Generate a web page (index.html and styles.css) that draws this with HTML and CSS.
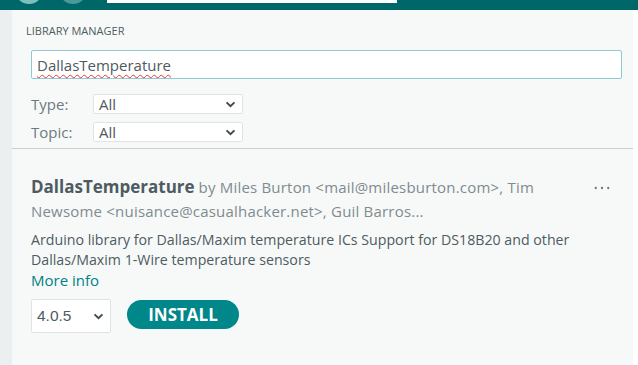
FILE: index.html
```html
<!DOCTYPE html>
<html>
<head>
<meta charset="utf-8">
<link rel="stylesheet" href="styles.css">
</head>
<body>
<div class="topbar">
  <span class="tb-btn tb-btn1"></span>
  <span class="tb-btn tb-btn2"></span>
  <span class="tb-select"></span>
</div>
<div class="main">
  <div class="sidebar"></div>
  <div class="panel">
    <div class="filters">
      <div class="title">LIBRARY MANAGER</div>
      <div class="search"><span class="search-text">DallasTemperature</span></div>
      <div class="filter-row first-row">
        <span class="filter-label">Type:</span>
        <div class="select"><span>All</span><svg class="chev" viewBox="0 0 12 8"><path d="M1.5 1.5 L6 6 L10.5 1.5" /></svg></div>
      </div>
      <div class="filter-row">
        <span class="filter-label">Topic:</span>
        <div class="select"><span>All</span><svg class="chev" viewBox="0 0 12 8"><path d="M1.5 1.5 L6 6 L10.5 1.5" /></svg></div>
      </div>
    </div>
    <div class="entry">
      <div class="entry-head">
        <div class="entry-title">
          <div class="title-line"><span class="lib-name">DallasTemperature</span> <span class="lib-author">by Miles Burton &lt;mail@milesburton.com&gt;, Tim</span></div>
          <div class="title-line lib-author">Newsome &lt;nuisance@casualhacker.net&gt;, Guil Barros...</div>
        </div>
        <svg class="more-btn" viewBox="0 0 18 4"><circle cx="2" cy="2" r="1.3"/><circle cx="9" cy="2" r="1.3"/><circle cx="16" cy="2" r="1.3"/></svg>
      </div>
      <div class="desc">Arduino library for Dallas/Maxim temperature ICs Support for DS18B20 and other Dallas/Maxim 1-Wire temperature sensors</div>
      <div class="more-info">More info</div>
      <div class="actions">
        <div class="version"><span>4.0.5</span><svg class="chev" viewBox="0 0 12 8"><path d="M1.5 1.5 L6 6 L10.5 1.5" /></svg></div>
        <div class="install">INSTALL</div>
      </div>
    </div>
  </div>
  <div class="rightgap"></div>
</div>
</body>
</html>
```
FILE: styles.css
```css
html, body {
  margin: 0;
  padding: 0;
}
body {
  width: 638px;
  height: 365px;
  overflow: hidden;
  font-family: "Open Sans", "Noto Sans", sans-serif;
  background: #ffffff;
}
.topbar {
  height: 10px;
  background: #006769;
  position: relative;
  overflow: hidden;
}
.tb-btn {
  position: absolute;
  top: -24px;
  width: 28px;
  height: 28px;
  border-radius: 50%;
}
.tb-btn1 { left: 15px; background: #7dbfbf; }
.tb-btn2 { left: 59px; background: #4a9a9b; }
.tb-select {
  position: absolute;
  left: 107px;
  top: 0;
  width: 290px;
  height: 3px;
  background: #ffffff;
}
.main {
  display: flex;
  height: 355px;
}
.sidebar {
  width: 12px;
  background: #eceff0;
}
.panel {
  flex: 1;
  background: #f7f9f9;
  display: flex;
  flex-direction: column;
}
.rightgap {
  width: 5px;
  background: #ffffff;
}
.filters {
  padding: 13px 11px 6px 14px;
  border-bottom: 1px solid #c9d0d0;
}
.title {
  font-size: 11px;
  color: #4e5b61;
  line-height: 16px;
}
.search {
  margin: 11px 0 0 5px;
  height: 29px;
  box-sizing: border-box;
  border: 1px solid #8dcbd0;
  border-radius: 2px;
  background: #ffffff;
  display: flex;
  align-items: center;
  padding-left: 5px;
}
.search-text {
  font-size: 15px;
  color: #4e5b61;
  text-decoration: underline wavy #e0393e;
  text-decoration-thickness: 1px;
  text-underline-offset: 3px;
}
.filter-row {
  display: flex;
  align-items: center;
  margin-left: 5px;
  margin-top: 8px;
}
.filter-row.first-row { margin-top: 15px; }
.filter-label {
  width: 62px;
  font-size: 15px;
  color: #6f7a7f;
  line-height: 20px;
}
.select {
  width: 150px;
  height: 20px;
  box-sizing: border-box;
  border: 1px solid #dfe4e5;
  border-radius: 2px;
  background: #ffffff;
  display: flex;
  align-items: center;
  justify-content: space-between;
  padding: 0 6px 0 5px;
  font-size: 15px;
  color: #4e5b61;
}
.chev {
  width: 11px;
  height: 7px;
  fill: none;
  stroke: #3f4a4f;
  stroke-width: 2.2;
}
.entry {
  padding: 26px 19px 0 19px;
}
.entry-head {
  display: flex;
  justify-content: space-between;
  align-items: flex-start;
}
.entry-title {
  width: 540px;
  font-size: 15px;
}
.title-line {
  line-height: 24px;
  white-space: nowrap;
}
.lib-name {
  font-size: 17px;
  font-weight: 700;
  color: #4e5b61;
}
.lib-author {
  color: #7f8b8f;
  letter-spacing: 0.2px;
}
.more-btn {
  width: 16px;
  height: 4px;
  margin-top: 11px;
  margin-right: 4px;
  fill: #6b777c;
}
.desc {
  margin-top: 7px;
  font-size: 14.2px;
  line-height: 20px;
  color: #4e5b61;
  width: 575px;
}
.more-info {
  font-size: 15px;
  line-height: 20px;
  color: #008184;
}
.actions {
  display: flex;
  align-items: flex-start;
  margin-top: 9px;
  gap: 16px;
}
.version {
  width: 80px;
  height: 34px;
  box-sizing: border-box;
  border: 1px solid #dfe4e5;
  border-radius: 2px;
  background: #ffffff;
  display: flex;
  align-items: center;
  justify-content: space-between;
  padding: 0 6px 0 5px;
  font-family: "Liberation Sans", Arial, sans-serif;
  font-size: 15.5px;
  color: #4e5b61;
}
.install {
  margin-top: 1px;
  width: 112px;
  height: 29px;
  border-radius: 15px;
  background: #00878a;
  color: #ffffff;
  font-weight: 700;
  font-size: 17px;
  display: flex;
  align-items: center;
  justify-content: center;
}
```
